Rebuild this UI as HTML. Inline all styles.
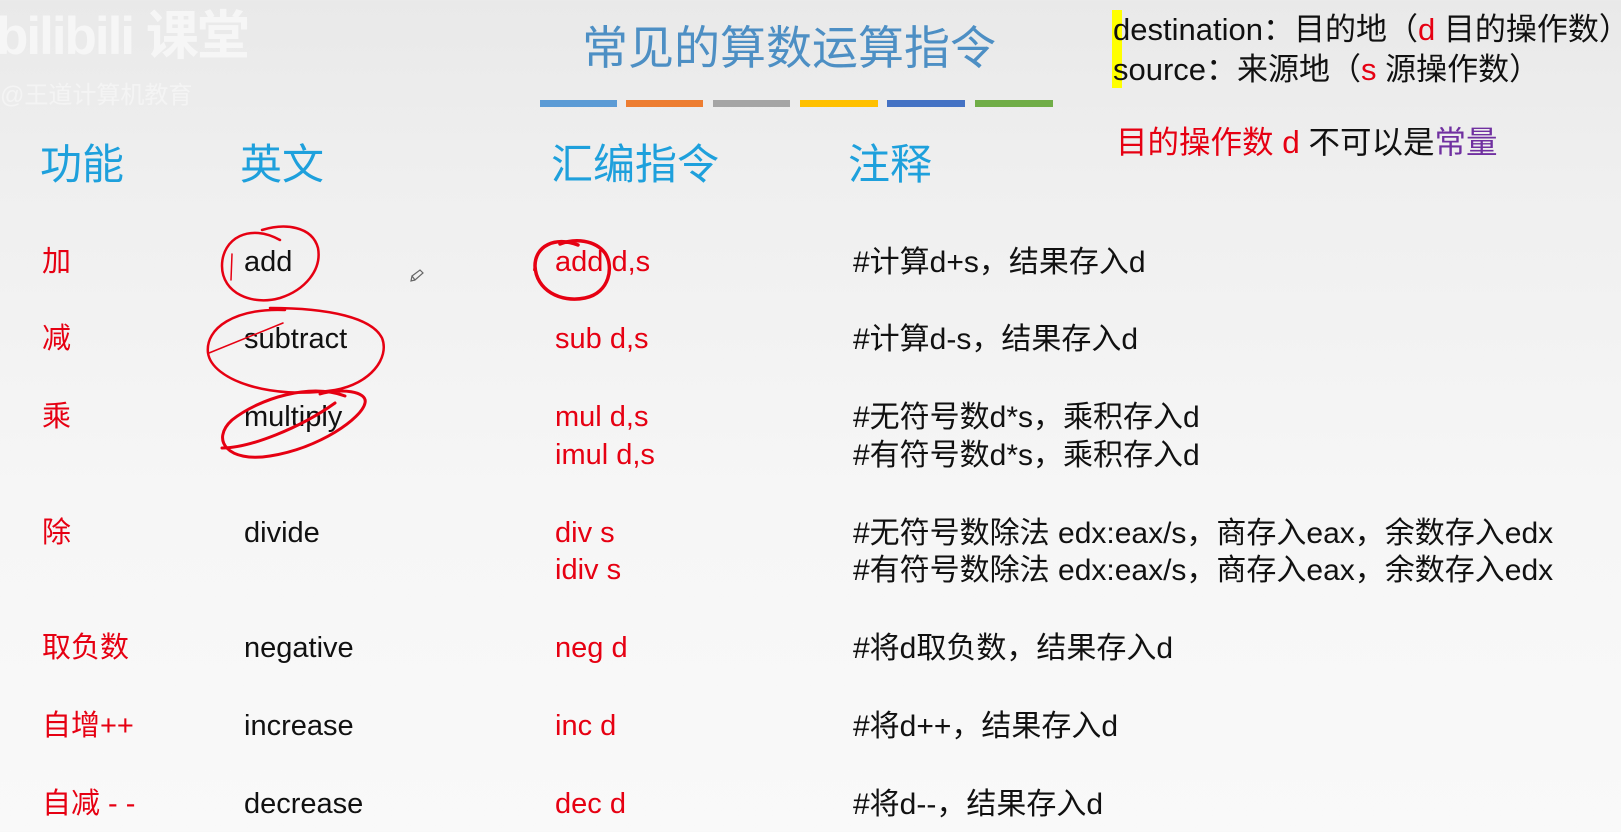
<!DOCTYPE html>
<html><head><meta charset="utf-8"><style>
body{margin:0;width:1621px;height:832px;overflow:hidden;background:linear-gradient(#e9e9e9 0,#efefef 180px,#f6f6f6 500px,#f9f9f9 832px);font-family:"Liberation Sans","Noto Sans CJK SC",sans-serif;position:relative}
.t{position:absolute;white-space:nowrap;line-height:1}
.h{color:#1ea0dc;font-size:42px}
.r{color:#e60012}
.b{color:#111}
.s{font-size:29px}
.c{font-size:30px}
</style></head><body>
<div class="t" style="left:-4px;top:10px;font-size:53px;font-weight:bold;color:#f6f6f6;letter-spacing:-2px">bilibili 课堂</div>
<div class="t" style="left:0;top:84px;font-size:24px;color:#f4f4f4">@王道计算机教育</div>
<div class="t" style="left:582px;top:25px;font-size:46px;color:#4d8fc4">常见的算数运算指令</div>
<div style="position:absolute;top:100px;left:540px;height:7px;width:77px;background:#5b9bd5"></div>
<div style="position:absolute;top:100px;left:626px;height:7px;width:77px;background:#ed7d31"></div>
<div style="position:absolute;top:100px;left:713px;height:7px;width:77px;background:#a5a5a5"></div>
<div style="position:absolute;top:100px;left:800px;height:7px;width:78px;background:#ffc000"></div>
<div style="position:absolute;top:100px;left:887px;height:7px;width:78px;background:#4472c4"></div>
<div style="position:absolute;top:100px;left:975px;height:7px;width:78px;background:#70ad47"></div>
<div style="position:absolute;left:1112px;top:10px;width:10px;height:78px;background:#ffff00"></div>
<div class="t b" style="left:1113px;top:14px;font-size:31px">destination：目的地（<span class="r">d</span> 目的操作数）</div>
<div class="t b" style="left:1113px;top:54px;font-size:31px">source：来源地（<span class="r">s</span> 源操作数）</div>
<div class="t r" style="left:1116px;top:127px;font-size:31.5px">目的操作数 d <span class="b">不可以是</span><span style="color:#7030a0">常量</span></div>
<div class="t h" style="left:40px;top:144px">功能</div>
<div class="t h" style="left:240px;top:144px">英文</div>
<div class="t h" style="left:551px;top:144px">汇编指令</div>
<div class="t h" style="left:848px;top:144px">注释</div>

<div class="t r s" style="left:42px;top:248px">加</div>
<div class="t b s" style="left:244px;top:248px">add</div>
<div class="t r s" style="left:555px;top:248px">add d,s</div>
<div class="t b c" style="left:853px;top:248px">#计算d+s，结果存入d</div>

<div class="t r s" style="left:42px;top:325px">减</div>
<div class="t b s" style="left:244px;top:325px">subtract</div>
<div class="t r s" style="left:555px;top:325px">sub d,s</div>
<div class="t b c" style="left:853px;top:325px">#计算d-s，结果存入d</div>

<div class="t r s" style="left:42px;top:403px">乘</div>
<div class="t b s" style="left:244px;top:403px">multiply</div>
<div class="t r s" style="left:555px;top:403px">mul d,s</div>
<div class="t r s" style="left:555px;top:441px">imul d,s</div>
<div class="t b c" style="left:853px;top:403px">#无符号数d*s，乘积存入d</div>
<div class="t b c" style="left:853px;top:441px">#有符号数d*s，乘积存入d</div>

<div class="t r s" style="left:42px;top:519px">除</div>
<div class="t b s" style="left:244px;top:519px">divide</div>
<div class="t r s" style="left:555px;top:519px">div s</div>
<div class="t r s" style="left:555px;top:556px">idiv s</div>
<div class="t b c" style="left:853px;top:519px">#无符号数除法 edx:eax/s，商存入eax，余数存入edx</div>
<div class="t b c" style="left:853px;top:556px">#有符号数除法 edx:eax/s，商存入eax，余数存入edx</div>

<div class="t r s" style="left:42px;top:634px">取负数</div>
<div class="t b s" style="left:244px;top:634px">negative</div>
<div class="t r s" style="left:555px;top:634px">neg d</div>
<div class="t b c" style="left:853px;top:634px">#将d取负数，结果存入d</div>

<div class="t r s" style="left:42px;top:712px">自增++</div>
<div class="t b s" style="left:244px;top:712px">increase</div>
<div class="t r s" style="left:555px;top:712px">inc d</div>
<div class="t b c" style="left:853px;top:712px">#将d++，结果存入d</div>

<div class="t r s" style="left:42px;top:790px">自减 - -</div>
<div class="t b s" style="left:244px;top:790px">decrease</div>
<div class="t r s" style="left:555px;top:790px">dec d</div>
<div class="t b c" style="left:853px;top:790px">#将d--，结果存入d</div>

<svg width="1621" height="832" style="position:absolute;left:0;top:0" fill="none" stroke="#e60012" stroke-linecap="round">
<g transform="translate(0,8)">
<path d="M280 232 C250 215 222 230 222 258 C222 285 252 298 280 290 C305 282 322 262 318 240 C312 218 285 215 262 222" stroke-width="2.5"/>
<path d="M232 246 L231 272" stroke-width="1.5"/>
<path d="M285 302 C235 300 205 320 208 345 C212 372 270 392 335 382 C370 376 390 350 382 330 C372 310 330 300 270 300" stroke-width="2.5"/>
<path d="M209 345 L283 315" stroke-width="1.5"/>
<path d="M345 388 C310 375 260 390 232 412 C210 432 228 455 270 448 C320 440 362 410 365 395 C368 383 340 380 320 386 M222 440 C250 440 300 420 335 395" stroke-width="3"/>
<path d="M578 237 C555 228 535 238 535 258 C536 282 560 295 585 290 C610 285 614 258 605 245 C595 232 575 230 560 236" stroke-width="3.5"/>
<path d="M536 250 L534 262" stroke-width="2"/>
<path d="M412 268 L420 262 L423 265 L415 272 Z M412 268 L411 273 L415 272" stroke="#666" stroke-width="1.2"/>
</g>
</svg>
</body></html>
